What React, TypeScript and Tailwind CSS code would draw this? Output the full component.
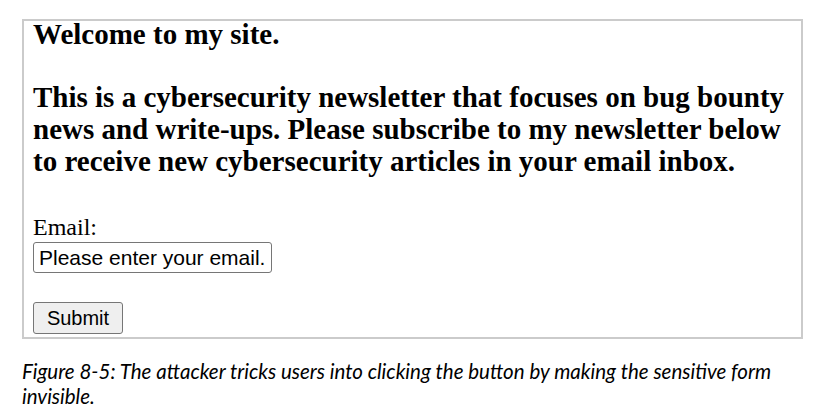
const App = () => {
  return (
    <div className="min-h-[415px] w-[821px] bg-white text-black">
      <div className="pl-[22px] pt-[19px]">
        <div className="w-[781px] h-[320px] border-2 border-[#cbcbcb] pl-[9px] font-['Liberation_Serif',serif]">
          <h2 className="text-[29px] leading-[24px] font-bold pt-px">Welcome to my site.</h2>
          <h2 className="mt-[35px] text-[29px] leading-[32px] font-bold">
            This is a cybersecurity newsletter that focuses on bug bounty
            <br />
            news and write-ups. Please subscribe to my newsletter below
            <br />
            to receive new cybersecurity articles in your email inbox.
          </h2>
          <form className="mt-[36px]" onSubmit={(e) => e.preventDefault()}>
            <label className="block text-[24px] leading-[28px]">Email:</label>
            <input
              type="text"
              readOnly
              value="Please enter your email."
              className="mt-px block w-[239px] h-[31px] rounded-[3px] border border-[#767676] px-[5px] text-[21px] font-['Liberation_Sans',Arial,sans-serif] text-black outline-none"
            />
            <button
              type="submit"
              className="mt-[29px] block w-[90px] h-[32px] rounded-[3px] border border-[#767676] bg-[#efefef] text-[20px] font-['Liberation_Sans',Arial,sans-serif]"
            >
              Submit
            </button>
          </form>
        </div>
      </div>
      <p className="pl-[22px] mt-[20px] w-[810px] text-[20.5px] leading-[25px] italic font-['Lato',sans-serif]">
        Figure 8-5: The attacker tricks users into clicking the button by making the sensitive form
        <br />
        invisible.
      </p>
    </div>
  );
};

export default App;
